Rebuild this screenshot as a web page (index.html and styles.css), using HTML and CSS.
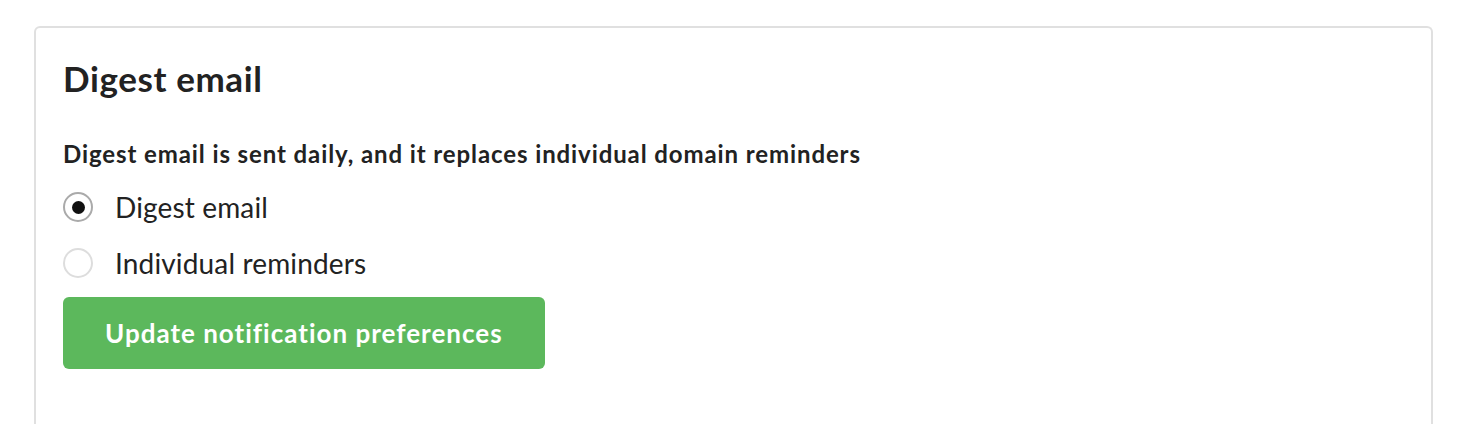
FILE: index.html
```html
<!DOCTYPE html>
<html lang="en">
<head>
    <meta charset="UTF-8">
    <title>Notification preferences</title>
    <link rel="stylesheet" href="styles.css">
</head>
<body>
    <div class="panel">
        <h2>Digest email</h2>
        <form class="prefs">
            <p class="help">Digest email is sent daily, and it replaces individual domain reminders</p>
            <label class="option">
                <input type="radio" name="mode" value="digest" checked>
                <span>Digest email</span>
            </label>
            <label class="option">
                <input type="radio" name="mode" value="individual">
                <span>Individual reminders</span>
            </label>
            <button type="submit" class="button">Update notification preferences</button>
        </form>
    </div>
</body>
</html>
```

FILE: styles.css
```css
body {
    margin: 0;
    padding: 26px 33px 0 34px;
    background: #fff;
    color: #222;
    font-family: Lato, "Open Sans", sans-serif;
}

.panel {
    border: 2px solid #e0e0e0;
    border-bottom: none;
    border-radius: 6px 6px 0 0;
    padding: 26px 27px 60px;
    min-height: 400px;
}

h2 {
    margin: 0 0 37px;
    font-size: 35px;
    font-weight: 700;
    line-height: 48px;
    letter-spacing: 0.6px;
}

.prefs {
    display: flex;
    flex-direction: column;
    align-items: flex-start;
}

.help {
    margin: 0 0 10px;
    font-size: 24px;
    font-weight: 700;
    line-height: 30px;
    letter-spacing: 0.9px;
}

.option {
    display: flex;
    align-items: center;
    gap: 22px;
    height: 56px;
    font-size: 28px;
    letter-spacing: 0.15px;
}

.option input {
    appearance: none;
    -webkit-appearance: none;
    margin: 0;
    width: 30px;
    height: 30px;
    border: 2px solid #ddd;
    border-radius: 50%;
    display: grid;
    place-items: center;
}

.option input:checked {
    border-color: #aaa;
}

.option input:checked::after {
    content: "";
    width: 13px;
    height: 13px;
    border-radius: 50%;
    background: #111;
}

.button {
    margin-top: 6px;
    padding: 0 42px;
    height: 72px;
    border: none;
    border-radius: 6px;
    background: #5cb85c;
    color: #fff;
    font-family: inherit;
    font-size: 26px;
    font-weight: 700;
    letter-spacing: 1px;
}
```
